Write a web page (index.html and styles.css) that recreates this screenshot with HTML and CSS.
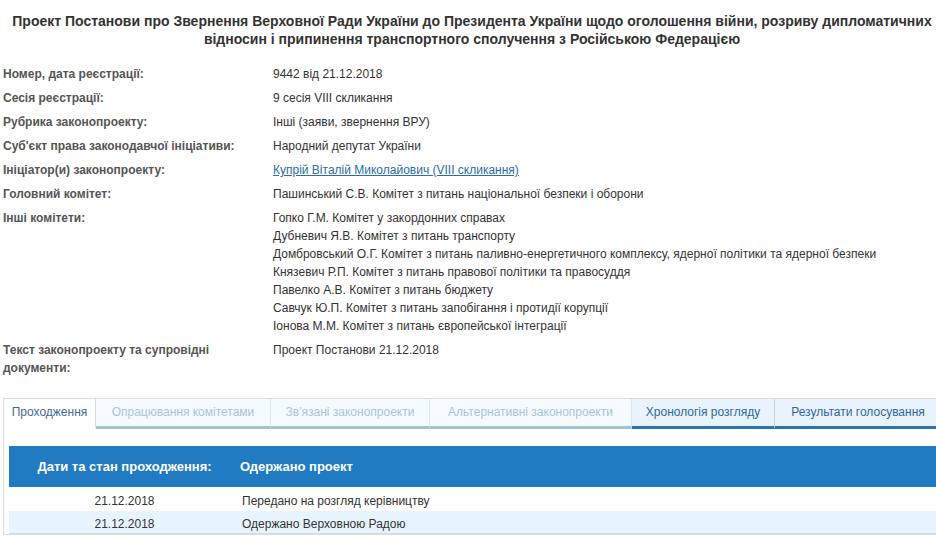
FILE: index.html
```html
<!DOCTYPE html>
<html lang="uk">
<head>
<meta charset="utf-8">
<title>Проект Постанови</title>
<link rel="stylesheet" href="styles.css">
</head>
<body>
<div class="page">
  <h1 class="title">Проект Постанови про Звернення Верховної Ради України до Президента України щодо оголошення війни, розриву дипломатичних відносин і припинення транспортного сполучення з Російською Федерацією</h1>

  <dl class="info">
    <dt>Номер, дата реєстрації:</dt>
    <dd>9442 від 21.12.2018</dd>
    <dt>Сесія реєстрації:</dt>
    <dd>9 сесія VIII скликання</dd>
    <dt>Рубрика законопроекту:</dt>
    <dd>Інші (заяви, звернення ВРУ)</dd>
    <dt>Суб'єкт права законодавчої ініціативи:</dt>
    <dd>Народний депутат України</dd>
    <dt>Ініціатор(и) законопроекту:</dt>
    <dd><a href="#" class="link">Купрій Віталій Миколайович (VIII скликання)</a></dd>
    <dt>Головний комітет:</dt>
    <dd>Пашинський С.В. Комітет з питань національної безпеки і оборони</dd>
    <dt>Інші комітети:</dt>
    <dd>
      <div>Гопко Г.М. Комітет у закордонних справах</div>
      <div>Дубневич Я.В. Комітет з питань транспорту</div>
      <div>Домбровський О.Г. Комітет з питань паливно-енергетичного комплексу, ядерної політики та ядерної безпеки</div>
      <div>Князевич Р.П. Комітет з питань правової політики та правосуддя</div>
      <div>Павелко А.В. Комітет з питань бюджету</div>
      <div>Савчук Ю.П. Комітет з питань запобігання і протидії корупції</div>
      <div>Іонова М.М. Комітет з питань європейської інтеграції</div>
    </dd>
    <dt class="wrap">Текст законопроекту та супровідні документи:</dt>
    <dd>Проект Постанови 21.12.2018</dd>
  </dl>

  <div class="tabs">
    <div class="tabbar">
      <div class="tab active">Проходження</div>
      <div class="tab disabled">Опрацювання комітетами</div>
      <div class="tab disabled">Зв'язані законопроекти</div>
      <div class="tab disabled">Альтернативні законопроекти</div>
      <div class="tab enabled">Хронологія розгляду</div>
      <div class="tab enabled last">Результати голосування</div>
    </div>
    <div class="panel">
      <div class="flow">
        <div class="flow-head">
          <div class="c1">Дати та стан проходження:</div>
          <div class="c2">Одержано проект</div>
        </div>
        <div class="flow-row">
          <div class="c1">21.12.2018</div>
          <div class="c2">Передано на розгляд керівництву</div>
        </div>
        <div class="flow-row alt">
          <div class="c1">21.12.2018</div>
          <div class="c2">Одержано Верховною Радою</div>
        </div>
      </div>
    </div>
  </div>
</div>
</body>
</html>
```

FILE: styles.css
```css
html, body {
  margin: 0;
  padding: 0;
  background: #fff;
  overflow: hidden;
}
body {
  font-family: "Liberation Sans", Arial, sans-serif;
  color: #333;
}
.page {
  width: 938px;
  padding: 0 3px;
}
.title {
  margin: 12px 0 17px;
  font-size: 14px;
  line-height: 18px;
  font-weight: bold;
  text-align: center;
  color: #333;
}
.info {
  margin: 0;
  display: grid;
  grid-template-columns: 270px 1fr;
  row-gap: 6px;
  font-size: 12px;
  line-height: 18px;
}
.info dt {
  font-weight: bold;
  color: #555;
}
.info dt.wrap {
  padding-right: 50px;
}
.info dd {
  margin: 0;
  color: #333;
}
.link {
  color: #2b6cab;
  text-decoration: underline;
}
.tabs {
  margin-top: 21px;
  border: 1px solid #dcdcdc;
  border-right: none;
}
.tabbar {
  display: grid;
  grid-template-columns: 92px 175px 159px 202px 143px 1fr;
  font-size: 12px;
}
.tab {
  height: 27px;
  line-height: 27px;
  text-align: center;
  border-right: 1px solid #dde6ee;
  border-bottom: 3px solid #a3c2dc;
  background: #f5faff;
  color: #a9c4dc;
  white-space: nowrap;
}
.tab.active {
  background: #fff;
  color: #3d6a93;
  border-bottom-color: transparent;
  border-right-color: #dcdcdc;
}
.tab.enabled {
  background: #e8f3fd;
  color: #2f68a0;
  border-bottom-color: #2a74b3;
  border-right-color: #d4d4d4;
}
.tab.last {
  border-right: none;
}
.panel {
  padding: 17px 0 0 5px;
}
.flow {
  font-size: 12px;
}
.flow-head {
  display: grid;
  grid-template-columns: 231px 1fr;
  height: 41px;
  align-items: center;
  background: #217bc2;
  color: #fff;
  font-weight: bold;
  font-size: 13px;
}
.flow-row {
  display: grid;
  grid-template-columns: 231px 1fr;
  box-sizing: border-box;
  height: 24px;
  padding-top: 5px;
  line-height: 18px;
  color: #333;
}
.flow-row.alt {
  height: 23px;
  padding-top: 4px;
  background: #e8f4fd;
  border-bottom: 1px solid #dadada;
}
.c1 {
  text-align: center;
}
.flow-row .c2 {
  padding-left: 2px;
}
```
